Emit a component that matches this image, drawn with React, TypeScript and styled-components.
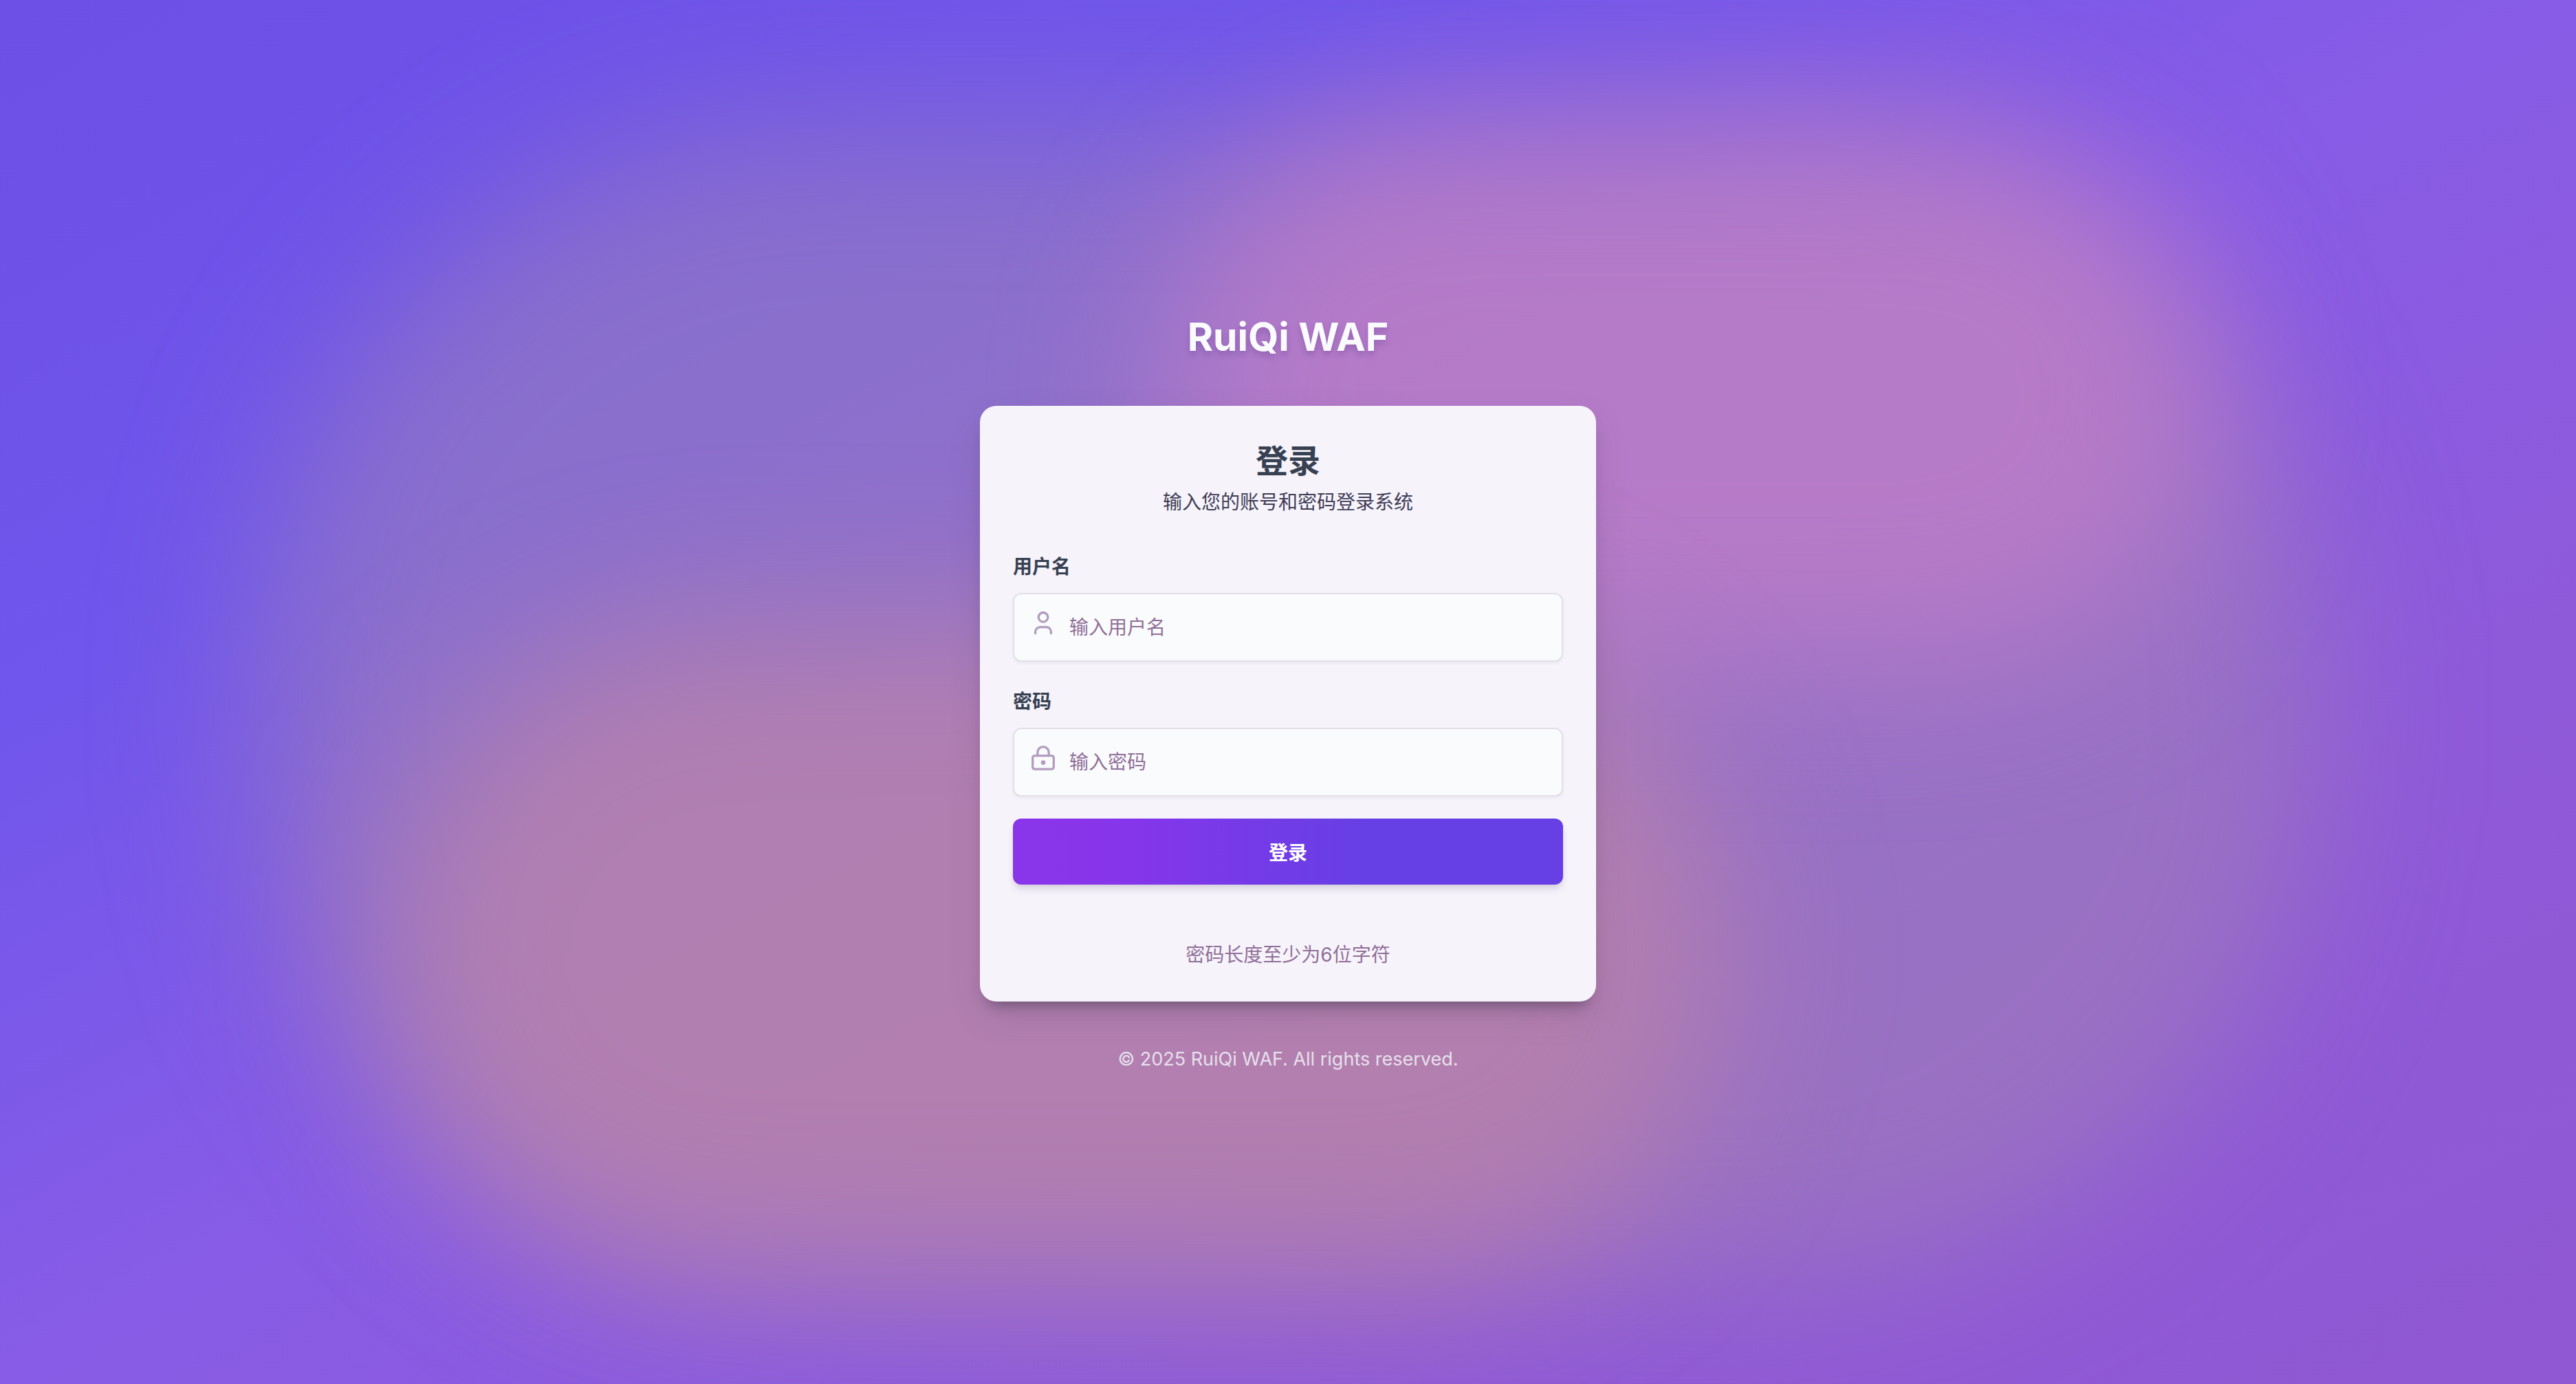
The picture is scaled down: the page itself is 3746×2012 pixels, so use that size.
import React, { useState } from 'react';
import styled, { createGlobalStyle } from 'styled-components';

const GlobalStyle = createGlobalStyle`
  *, *::before, *::after { box-sizing: border-box; }
  body {
    margin: 0;
    background: #ffffff;
    font-family: Inter, "Noto Sans CJK SC", sans-serif;
    -webkit-font-smoothing: antialiased;
  }
  h1, h2, p { margin: 0; }
`;

const Page = styled.main`
  position: relative;
  display: flex;
  align-items: center;
  justify-content: center;
  min-height: 100vh;
  overflow: hidden;
  background: linear-gradient(to bottom right, #6d50e6 0%, #7056ec 26%, #885ce6 50%, #8f5ad9 74%, #9058d2 100%);
`;

const Glow = styled.div<{ $inset: string; $color: string }>`
  position: absolute;
  inset: ${(p) => p.$inset};
  border-radius: 800px;
  background: ${(p) => p.$color};
  filter: blur(112px);
`;

const Content = styled.div`
  position: relative;
  display: flex;
  flex-direction: column;
  align-items: center;
  width: 100%;
  max-width: 896px;
`;

const Brand = styled.h1`
  font-size: 57px;
  line-height: 76px;
  font-weight: 700;
  color: #fafbff;
  text-shadow: 0 6px 8px rgba(60, 30, 110, 0.22);
  margin-bottom: 62px;
`;

const Card = styled.section`
  width: 100%;
  padding: 48px;
  border-radius: 24px;
  background: #f6f3fb;
  box-shadow: 0 20px 50px -6px rgba(90, 70, 100, 0.22), 0 16px 20px -12px rgba(70, 60, 80, 0.6);
`;

const Title = styled.h2`
  font-size: 47px;
  line-height: 64px;
  font-weight: 700;
  color: #374151;
  text-align: center;
`;

const Subtitle = styled.p`
  margin-bottom: 44px;
  font-size: 28px;
  line-height: 56px;
  color: #3f3d55;
  text-align: center;
`;

const Form = styled.form`
  display: flex;
  flex-direction: column;
  gap: 32px;
`;

const Fields = styled.div`
  display: flex;
  flex-direction: column;
  gap: 36px;
`;

const Field = styled.div`
  display: flex;
  flex-direction: column;
  gap: 16px;
`;

const Label = styled.label`
  font-size: 28px;
  line-height: 44px;
  font-weight: 600;
  color: #374151;
`;

const InputBox = styled.div`
  display: flex;
  height: 100px;
  padding: 0 22px;
  gap: 18px;
  border: 2px solid #e4e0ea;
  border-radius: 12px;
  background: #fafbfd;
  box-shadow: 0 2px 4px rgba(60, 40, 80, 0.06);

  svg {
    flex: none;
    width: 40px;
    height: 40px;
    margin-top: 22px;
    color: #b39dbf;
  }
`;

const TextInput = styled.input`
  flex: 1;
  min-width: 0;
  padding: 0;
  border: 0;
  outline: 0;
  background: transparent;
  font: inherit;
  font-size: 28px;
  color: #374151;

  &::placeholder { color: #906f98; opacity: 1; }
`;

const Submit = styled.button`
  height: 96px;
  border: 0;
  border-radius: 12px;
  background: linear-gradient(90deg, #8a35ea 0%, #8735ea 18%, #663fe5 64%, #663fe5 100%);
  box-shadow: 0 8px 12px -2px rgba(60, 40, 80, 0.14), 0 4px 8px -4px rgba(60, 40, 80, 0.12);
  font: inherit;
  font-size: 28px;
  font-weight: 600;
  color: #ffffff;
`;

const Hint = styled.p`
  margin-top: 82px;
  font-size: 28px;
  line-height: 40px;
  color: #906f98;
  text-align: center;
`;

const Copyright = styled.footer`
  margin-top: 64px;
  font-size: 27px;
  line-height: 40px;
  color: #e6e0ec;
`;

const UserIcon = () => (
  <svg viewBox="0 0 40 40" fill="none" stroke="currentColor" strokeWidth="3.3" strokeLinecap="round" aria-hidden="true">
    <circle cx="20" cy="11.3" r="6.800" />
    <path d="M8.600 34.800V32.600a7 7 0 0 1 7-7h8.800a7 7 0 0 1 7 7V34.800" />
  </svg>
);

const LockIcon = () => (
  <svg viewBox="0 0 40 40" fill="none" stroke="currentColor" strokeWidth="3.3" strokeLinecap="round" aria-hidden="true">
    <rect x="4.700" y="16.600" width="30.600" height="19.600" rx="3" />
    <path d="M11.800 16.600v-4.800a8.200 8.200 0 0 1 16.400 0v4.800" />
    <circle cx="20" cy="26.600" r="3.400" fill="currentColor" stroke="none" />
  </svg>
);

export default function App() {
  const [username, setUsername] = useState('');
  const [password, setPassword] = useState('');

  return (
    <>
      <GlobalStyle />
      <Page>
        <Glow $inset="9% 10% 7% 10%" $color="rgba(166, 138, 172, 0.48)" />
        <Glow $inset="9% 14% 52% 45%" $color="rgba(200, 128, 198, 0.64)" />
        <Glow $inset="45% 33% 8% 15%" $color="rgba(194, 134, 162, 0.64)" />
        <Content>
          <Brand>RuiQi WAF</Brand>
          <Card>
            <Title>登录</Title>
            <Subtitle>输入您的账号和密码登录系统</Subtitle>
            <Form onSubmit={(e) => e.preventDefault()}>
              <Fields>
                <Field>
                  <Label htmlFor="username">用户名</Label>
                  <InputBox>
                    <UserIcon />
                    <TextInput id="username" placeholder="输入用户名" value={username} onChange={(e) => setUsername(e.target.value)} />
                  </InputBox>
                </Field>
                <Field>
                  <Label htmlFor="password">密码</Label>
                  <InputBox>
                    <LockIcon />
                    <TextInput id="password" type="password" placeholder="输入密码" value={password} onChange={(e) => setPassword(e.target.value)} />
                  </InputBox>
                </Field>
              </Fields>
              <Submit type="submit">登录</Submit>
            </Form>
            <Hint>密码长度至少为6位字符</Hint>
          </Card>
          <Copyright>© 2025 RuiQi WAF. All rights reserved.</Copyright>
        </Content>
      </Page>
    </>
  );
}
